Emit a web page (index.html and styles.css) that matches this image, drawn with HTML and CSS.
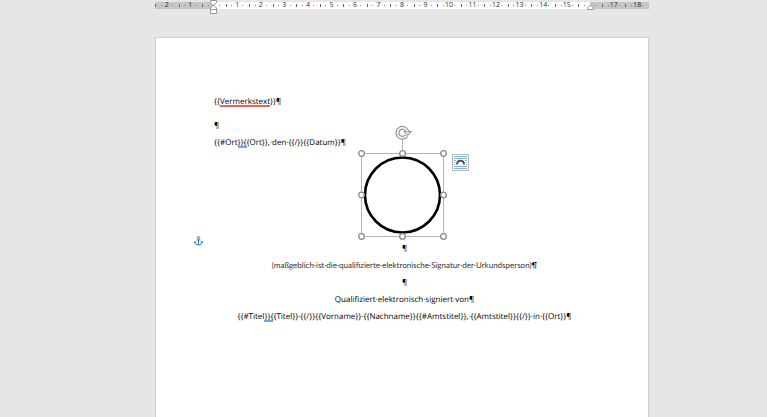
FILE: index.html
```html
<!DOCTYPE html>
<html lang="de">
<head>
<meta charset="utf-8">
<title>Vermerk</title>
<link rel="stylesheet" href="styles.css">
</head>
<body>
<div class="workspace">
  <div class="ruler">
    <span>2</span><span>1</span><span></span><span>1</span><span>2</span><span>3</span><span>4</span><span>5</span><span>6</span><span>7</span><span>8</span><span>9</span><span>10</span><span>11</span><span>12</span><span>13</span><span>14</span><span>15</span><span></span><span>17</span><span>18</span>
    <svg class="marker marker-left" width="8" height="15" viewBox="0 0 8 15" aria-hidden="true">
      <path d="M.5 .5h6v2l-3 3-3-3zM.5 9.500v-1.500l3-3 3 3v1.500zM.5 9.500h6v4h-6z"/>
    </svg>
    <svg class="marker marker-right" width="8" height="15" viewBox="0 0 8 15" aria-hidden="true">
      <path d="M.5 9.500v-1.500l3-3 3 3v1.500z"/>
    </svg>
  </div>
  <main class="page">
    <p class="lead">{{<span class="spelling">Vermerkstext</span>}}¶</p>
    <p>¶</p>
    <p>{{#Ort<span class="grammar">}}{</span>{Ort}},·den·{{/}}{{Datum}}¶</p>
    <div class="shape">
      <svg class="seal" width="90" height="89" viewBox="0 1 90 89" aria-hidden="true">
        <circle class="ring" cx="44.500" cy="45" r="37.500"/>
        <path class="frame" d="M3.500 3.500h82v83h-82zM44.500 3.500v-15"/>
        <g class="handles">
          <circle cx="3.500" cy="3.500" r="2.800"/><circle cx="44.500" cy="3.500" r="2.800"/><circle cx="85.500" cy="3.500" r="2.800"/>
          <circle cx="3.500" cy="45" r="2.800"/><circle cx="85.500" cy="45" r="2.800"/>
          <circle cx="3.500" cy="86.500" r="2.800"/><circle cx="44.500" cy="86.500" r="2.800"/><circle cx="85.500" cy="86.500" r="2.800"/>
        </g>
        <g class="rotate">
          <path class="rotate-edge" d="M48.500 -14.300A5 5 0 1 1 49.200 -18.500"/>
          <path class="rotate-head" d="M46 -18.500h7.500l-3.800 4z"/>
          <path class="rotate-core" d="M48.500 -14.300A5 5 0 1 1 49.200 -18.500"/>
        </g>
      </svg>
      <button class="layout-options" type="button" aria-label="Layoutoptionen">
        <svg width="15" height="15" viewBox="0 0 15 15" aria-hidden="true">
          <path class="lines" d="M1 1.500h13M1 3.500h13M1 5.500h2M12 5.500h2M1 7.500h1M13 7.500h1M1 9.500h1M13 9.500h1M1 11.500h13M1 13.500h13"/>
          <path class="arch" d="M4 9.500c0-5 7-5 7 0"/>
        </svg>
      </button>
    </div>
    <div class="centered">
      <svg class="anchor" width="9" height="10" viewBox="0 0 9 10" aria-hidden="true">
        <circle cx="4.500" cy="1.600" r="1.100"/>
        <path d="M4.500 2.700v6.300M2.500 4h4M.8 5.800c.3 2 1.600 3.200 3.700 3.200s3.400-1.200 3.700-3.200M.3 7l.5-1.500 1.500.9M8.700 7l-.5-1.500-1.500.9"/>
      </svg>
      <p>¶</p>
      <p class="note">(maßgeblich·ist·die·qualifizierte·elektronische·Signatur·der·Urkundsperson)<span class="mark">¶</span></p>
      <p>¶</p>
      <p>Qualifiziert·elektronisch·signiert·von¶</p>
      <p>{{#Titel<span class="grammar">}}{</span>{Titel}}·{{/}}{{Vorname}}·{{Nachname}}{{#Amtstitel}},·{{Amtstitel}}{{/}}·in·{{Ort}}¶</p>
    </div>
  </main>
</div>
</body>
</html>
```
FILE: styles.css
```css
* {
  box-sizing: border-box;
}

body {
  margin: 0;
  background: #e6e6e6;
  color: #000;
  font: 8px/17px "Open Sans", "Noto Sans", sans-serif;
  text-rendering: geometricPrecision;
}

.workspace {
  display: flex;
  flex-direction: column;
  gap: 28px;
  min-height: 100vh;
  padding: 2px 118px 0 155px;
}

.ruler {
  position: relative;
  display: grid;
  grid-template-columns: repeat(21, 1fr);
  height: 7px;
  background: linear-gradient(90deg, #c6c6c6 12%, #fff 12%, #fff 88%, #c6c6c6 88%);
  color: #333;
  font-size: 7px;
  line-height: 7px;
  text-align: center;
}

.ruler span {
  background:
    linear-gradient(#666, #666) 0 50% / 1px 3px no-repeat,
    linear-gradient(#888, #888) 25% 50% / 1px 1px no-repeat,
    linear-gradient(#888, #888) 75% 50% / 1px 1px no-repeat;
}

.marker {
  position: absolute;
  top: -2px;
  fill: #fff;
  stroke: #999;
}

.marker-left {
  left: calc(12% - 4px);
}

.marker-right {
  left: calc(88% - 3px);
}

.page {
  flex: 1;
  padding: 55px 58px 0;
  border: 1px solid #cfcfcf;
  border-bottom: 0;
  background: #fff;
}

p {
  margin: 0;
  white-space: nowrap;
}

.lead {
  margin-bottom: 7px;
}

.spelling {
  background: linear-gradient(#f0605c, #f0605c) 0 100% / 100% 2px no-repeat;
}

.grammar {
  background: linear-gradient(#7ba4f2, #7ba4f2) 0 100% / 100% 2px no-repeat;
}

.shape {
  position: relative;
  display: flex;
  justify-content: center;
  padding-left: 1px;
}

.seal {
  overflow: visible;
  fill: none;
}

.ring {
  stroke: #000;
  stroke-width: 2.600;
}

.frame {
  stroke: #b5b5b5;
}

.handles {
  fill: #fff;
  stroke: #8a8a8a;
  stroke-width: 1.300;
}

.rotate-edge {
  stroke: #8a8a8a;
  stroke-width: 4;
}

.rotate-core {
  stroke: #eee;
  stroke-width: 2;
}

.rotate-head {
  fill: #ddd;
  stroke: #8a8a8a;
}

.layout-options {
  position: absolute;
  top: 3px;
  left: calc(50% + 50px);
  display: flex;
  padding: 0;
  border: 1px solid #b8b8b8;
  background: #fff;
}

.lines {
  stroke: #83b4df;
}

.arch {
  fill: none;
  stroke: #555;
  stroke-width: 2;
}

.centered {
  position: relative;
  padding-left: 5px;
  text-align: center;
}

.note {
  color: #333;
  font-family: Lato, "Open Sans", sans-serif;
}

.mark {
  color: #000;
}

.anchor {
  position: absolute;
  top: -4px;
  left: -20px;
  fill: none;
  stroke: #3f7fbd;
}
```
